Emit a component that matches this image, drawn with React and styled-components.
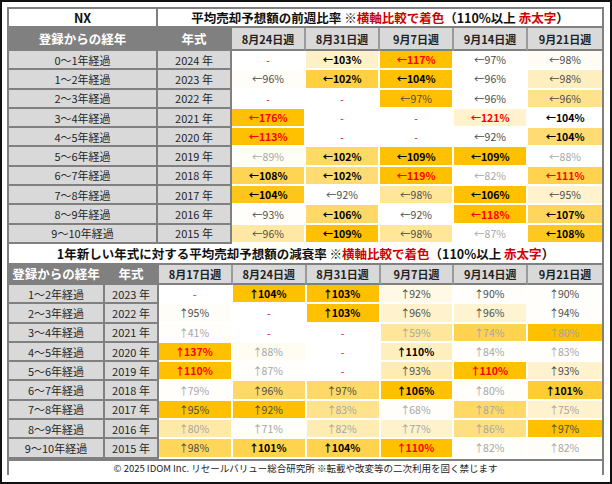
import styled, { createGlobalStyle } from 'styled-components'

const GlobalStyle = createGlobalStyle`
    body {
        margin: 0;
        background: #fff;
        font-family: "Noto Sans CJK JP", "Noto Sans", sans-serif;
    }
`

const weekly = {
    dates: ['8月24日週', '8月31日週', '9月7日週', '9月14日週', '9月21日週'],
    rows: [
        ['0～1年経過', '2024 年', [[null, 0], [103, 0.22], [117, 1], [97, 0], [98, 0.04]]],
        ['1～2年経過', '2023 年', [[96, 0.03], [102, 0.75], [104, 1], [96, 0], [98, 0.25]]],
        ['2～3年経過', '2022 年', [[null, 0], [null, 0], [97, 1], [96, 0], [96, 0.45]]],
        ['3～4年経過', '2021 年', [[176, 1], [null, 0], [null, 0], [121, 0.2], [104, 0]]],
        ['4～5年経過', '2020 年', [[113, 1], [null, 0], [null, 0], [92, 0], [104, 0.55]]],
        ['5～6年経過', '2019 年', [[89, 0.03], [102, 0.6], [109, 1], [109, 1], [88, 0]]],
        ['6～7年経過', '2018 年', [[108, 0.68], [102, 0.55], [119, 1], [82, 0], [111, 0.7]]],
        ['7～8年経過', '2017 年', [[104, 0.9], [92, 0], [98, 0.4], [106, 1], [95, 0.2]]],
        ['8～9年経過', '2016 年', [[93, 0.02], [106, 0.6], [92, 0], [118, 1], [107, 0.65]]],
        ['9～10年経過', '2015 年', [[96, 0.36], [109, 1], [98, 0.4], [87, 0], [108, 0.88]]],
    ],
}

const decay = {
    dates: ['8月17日週', '8月24日週', '8月31日週', '9月7日週', '9月14日週', '9月21日週'],
    rows: [
        ['1～2年経過', '2023 年', [[null, 0], [104, 1], [103, 1], [92, 0.1], [90, 0.02], [90, 0.02]]],
        ['2～3年経過', '2022 年', [[95, 0.03], [null, 0], [103, 1], [96, 0.2], [96, 0.18], [94, 0.02]]],
        ['3～4年経過', '2021 年', [[41, 0.02], [null, 0], [null, 0], [59, 0.4], [74, 0.7], [80, 1]]],
        ['4～5年経過', '2020 年', [[137, 1], [88, 0.05], [null, 0], [109.6, 0.25], [84, 0.02], [83, 0.02]]],
        ['5～6年経過', '2019 年', [[110, 1], [87, 0.02], [null, 0], [93, 0.3], [110, 1], [93, 0.2]]],
        ['6～7年経過', '2018 年', [[79, 0.02], [96, 0.6], [97, 0.6], [106, 1], [80, 0.02], [101, 0.8]]],
        ['7～8年経過', '2017 年', [[95, 1], [92, 1], [83, 0.45], [68, 0.02], [87, 0.6], [75, 0.2]]],
        ['8～9年経過', '2016 年', [[80, 0.35], [71, 0.02], [82, 0.3], [77, 0.2], [86, 0.5], [97, 1]]],
        ['9～10年経過', '2015 年', [[98, 0.65], [101, 0.7], [104, 0.7], [110, 1], [82, 0.02], [82, 0.03]]],
    ],
}

// white -> #ffc000 scale
const shade = t =>
    `rgb(255,${Math.round(255 - 63 * t)},${Math.round(255 - 255 * t)})`

const toneOf = v => {
    if (v == null) return 'dash'
    if (v >= 110) return 'top'
    if (v >= 100) return 'high'
    if (v >= 90) return 'mid'
    return 'low'
}

const Title = ({ children }) => (
    <span>
        {children} ※<Red>横軸比較で着色</Red>（110%以上 <Red>赤太字</Red>）
    </span>
)

const DataRow = ({ cols, label, year, cells, arrow }) => (
    <Row $cols={cols}>
        <LabelCell>{label}</LabelCell>
        <LabelCell>{year}</LabelCell>
        {cells.map(([v, t], i) => (
            <ValueCell key={i} $bg={shade(t)} $tone={toneOf(v)}>
                {v == null ? (
                    '-'
                ) : (
                    <>
                        <Arrow $narrow={arrow === '↑'}>{arrow}</Arrow>
                        {Math.round(v)}%
                    </>
                )}
            </ValueCell>
        ))}
    </Row>
)

const App = () => {
    const cols1 = '149px 74px repeat(5, 1fr)'
    const cols2 = '96px 54px repeat(6, 1fr)'

    return (
        <>
            <GlobalStyle />
            <Frame>
                <Sheet>
                    <Row $cols='149px 1fr' $h={19}>
                        <TitleCell $border>NX</TitleCell>
                        <TitleCell>
                            <Title>平均売却予想額の前週比率</Title>
                        </TitleCell>
                    </Row>
                    <Row $cols={cols1} $h={23}>
                        <HeadLabel>登録からの経年</HeadLabel>
                        <HeadLabel>年式</HeadLabel>
                        {weekly.dates.map(d => (
                            <HeadDate key={d}>{d}</HeadDate>
                        ))}
                    </Row>
                    {weekly.rows.map(([label, year, cells]) => (
                        <DataRow
                            key={label}
                            cols={cols1}
                            label={label}
                            year={year}
                            cells={cells}
                            arrow='←'
                        />
                    ))}

                    <Row $cols='1fr' $h={21}>
                        <TitleCell>
                            <Title>1年新しい年式に対する平均売却予想額の減衰率</Title>
                        </TitleCell>
                    </Row>
                    <Row $cols={cols2} $h={20}>
                        <HeadLabel>登録からの経年</HeadLabel>
                        <HeadLabel>年式</HeadLabel>
                        {decay.dates.map(d => (
                            <HeadDate key={d}>{d}</HeadDate>
                        ))}
                    </Row>
                    {decay.rows.map(([label, year, cells]) => (
                        <DataRow
                            key={label}
                            cols={cols2}
                            label={label}
                            year={year}
                            cells={cells}
                            arrow='↑'
                        />
                    ))}

                    <Footer>
                        <span>
                            © 2025 IDOM Inc. リセールバリュー総合研究所
                            ※転載や改変等の二次利用を固く禁じます
                        </span>
                    </Footer>
                </Sheet>
            </Frame>
        </>
    )
}

const Frame = styled.div`
    width: 612px;
    height: 484px;
    box-sizing: border-box;
    border: 2px solid #111;
    padding: 5px 6px 7px 5px;
    background: #fff;
`

const Sheet = styled.div`
    height: 100%;
    box-sizing: border-box;
    border: 2px solid #808080;
    display: flex;
    flex-direction: column;
`

const Row = styled.div`
    display: grid;
    grid-template-columns: ${p => p.$cols};
    height: ${p => p.$h || 19.3}px;
    flex: none;
`

const Cell = styled.div`
    box-sizing: border-box;
    display: flex;
    align-items: center;
    justify-content: center;
    white-space: nowrap;
    overflow: hidden;
    min-width: 0;
`

const TitleCell = styled(Cell)`
    background: #fff;
    color: #111;
    font-size: 12.5px;
    font-weight: 700;
    border-bottom: 2px solid #808080;
    border-right: ${p => (p.$border ? '2px solid #808080' : 'none')};
`

const Red = styled.span`
    color: #d00000;
`

const HeadLabel = styled(Cell)`
    background: #808080;
    color: #fff;
    font-size: 12.5px;
    font-weight: 700;
    border-right: 2px solid #808080;
    border-bottom: 2px solid #808080;
`

const HeadDate = styled(Cell)`
    background: #d9d9d9;
    color: #222;
    font-size: 11px;
    font-weight: 700;
    border-right: 2px solid #9a9a9a;
    border-bottom: 2px solid #808080;

    &:last-child {
        border-right: none;
    }
`

const LabelCell = styled(Cell)`
    background: #d9d9d9;
    color: #262626;
    font-size: 11px;
    border-right: 2px solid #808080;
    border-bottom: 2px solid #808080;
`

const tones = {
    dash: 'color: #ff0000; font-weight: 400;',
    low: 'color: #a6a6a6; font-weight: 400;',
    mid: 'color: #4a4a4a; font-weight: 400;',
    high: 'color: #000; font-weight: 700;',
    top: 'color: #ff0000; font-weight: 700;',
}

const ValueCell = styled(Cell)`
    background: ${p => p.$bg};
    font-size: 10.5px;
    border-right: 2px solid #fff;
    border-bottom: 2px solid #fff;
    ${p => tones[p.$tone]}

    &:last-child {
        border-right: none;
    }
`

const Arrow = styled.span`
    display: inline-flex;
    justify-content: center;
    width: ${p => (p.$narrow ? '6px' : 'auto')};
    margin-right: ${p => (p.$narrow ? '1px' : '0')};
`

const Footer = styled.div`
    flex: 1;
    display: flex;
    align-items: center;
    justify-content: center;
    border-top: 2px solid #808080;
    background: #fff;
    color: #222;
    font-size: 9.5px;
    white-space: nowrap;
`

export default App
